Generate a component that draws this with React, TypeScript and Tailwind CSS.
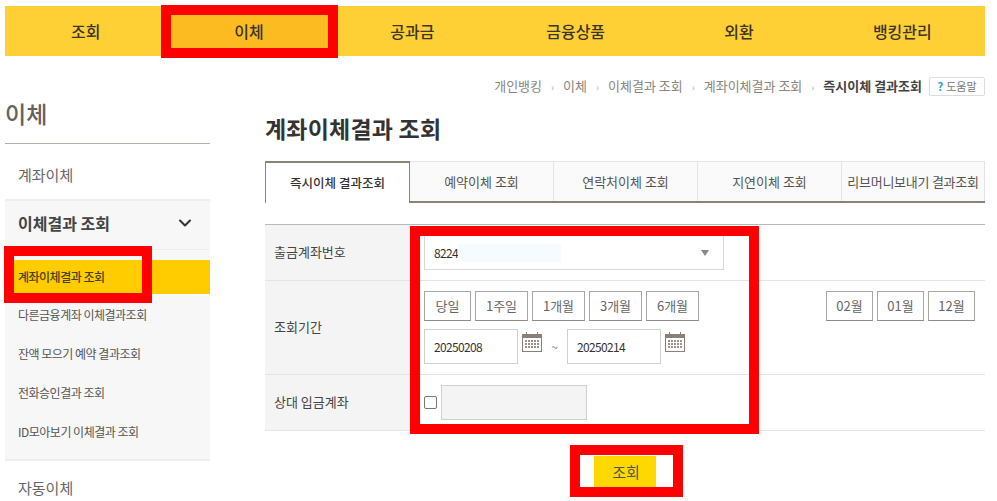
import React from "react";
import { ChevronDown } from "lucide-react";

const navItems = ["조회", "이체", "공과금", "금융상품", "외환", "뱅킹관리"];
const crumbs = ["개인뱅킹", "이체", "이체결과 조회", "계좌이체결과 조회"];
const tabs = ["예약이체 조회", "연락처이체 조회", "지연이체 조회"];
const subMenu = ["다른금융계좌 이체결과조회", "잔액 모으기 예약 결과조회", "전화승인결과 조회", "ID모아보기 이체결과 조회"];

const CalendarIcon = () => (
  <svg width="20" height="20" viewBox="0 0 20 20" className="mt-[3px] ml-1 shrink-0">
    <rect x="0.5" y="2.5" width="19" height="17" fill="#fff" stroke="#8a8078" />
    <rect x="0" y="2" width="20" height="4" fill="#8a8078" />
    <rect x="4" y="0" width="1" height="3" fill="#8a8078" />
    <rect x="15" y="0" width="1" height="3" fill="#8a8078" />
    {[8, 11, 14].map((y) =>
      [3, 6, 9, 12, 15].map((x) => <rect key={`${x}-${y}`} x={x} y={y} width="2" height="2" fill="#9a928b" />)
    )}
  </svg>
);

const PeriodButton = ({ label, width }: { label: string; width: string }) => (
  <button className={`${width} h-[30px] border border-[#aaa7a3] border-b-[#8f8a85] bg-white text-[13px] text-[#666]`}>
    {label}
  </button>
);

const DateInput = ({ value }: { value: string }) => (
  <div className="w-[94px] h-[35px] border border-[#d0d0d0] pl-[9px] flex items-center text-[12px] tracking-[-0.65px] text-[#333]">{value}</div>
);

const FormRow = ({ label, height, children }: { label: string; height: string; children: React.ReactNode }) => (
  <div className={`flex ${height} border-b border-[#e4e4e4]`}>
    <div className="w-[145px] shrink-0 bg-[#f4f4f4] pl-[9px] pb-[2px] flex items-center text-[13px] text-[#444]">{label}</div>
    <div className="flex-1 pl-[14px] pr-[10px]">{children}</div>
  </div>
);

export default function App() {
  return (
    <div className="relative w-[997px] h-[501px] overflow-hidden bg-white pt-[6px] px-[5px] text-[#444] font-['Noto_Sans_CJK_KR','Noto_Sans',sans-serif]">
      {/* top nav */}
      <div className="w-[980px] h-[50px] bg-[#ffd036] grid grid-cols-6">
        {navItems.map((item) => (
          <div
            key={item}
            className={`flex items-center justify-center pr-[2px] text-[16px] font-medium text-[#3d3426] ${item === "이체" ? "bg-[#fdbb22]" : ""}`}
          >
            {item}
          </div>
        ))}
      </div>

      <div className="flex">
        {/* sidebar */}
        <div className="w-[205px] shrink-0 pt-[40px]">
          <div className="h-[48px] border-b border-[#b5b1aa] text-[23px] font-medium leading-[35px] text-[#66605a]">이체</div>
          <div className="h-[55px] pl-[13px] pt-[8px] flex items-center text-[15px] text-[#666]">계좌이체</div>
          <div className="bg-[#f7f7f7] border-t-2 border-b-2 border-[#eeeeee] h-[262px]">
            <div className="h-[49px] pl-[13px] pr-[15px] pb-[4px] flex items-center justify-between border-b border-[#eeeeee]">
              <span className="text-[16px] font-bold text-[#444]">이체결과 조회</span>
              <ChevronDown size={20} strokeWidth={2.5} className="text-[#333]" />
            </div>
            <div className="pt-[10px]">
              <div className="h-[34px] bg-[#ffcc00] pl-[13px] flex items-center text-[12px] tracking-[-0.5px] font-medium text-[#4a3f1c]">
                계좌이체결과 조회
              </div>
              {subMenu.map((item) => (
                <div key={item} className="h-[39px] pl-[13px] pt-[3px] flex items-center text-[12px] tracking-[-0.5px] text-[#555]">
                  {item}
                </div>
              ))}
            </div>
          </div>
          <div className="pl-[13px] pt-[15px] text-[15px] leading-[24px] text-[#666]">자동이체</div>
        </div>

        {/* main */}
        <div className="w-[720px] ml-[55px]">
          <div className="h-[40px] pt-[20px] flex items-center justify-end text-[13px] text-[#8a8580]">
            {crumbs.map((crumb) => (
              <React.Fragment key={crumb}>
                <span>{crumb}</span>
                <span className="mx-[9px] text-[10px] text-[#b5b1aa]">›</span>
              </React.Fragment>
            ))}
            <span className="font-bold text-[#444]">즉시이체 결과조회</span>
            <span className="ml-[7px] w-[56px] h-[19px] border border-[#ddd] rounded-[2px] flex items-center justify-center text-[11px] text-[#777]">
              <b className="text-[#2a9bc9] mr-[3px]">?</b>도움말
            </span>
          </div>

          <h1 className="mt-[16px] h-[36px] text-[23px] tracking-[0.2px] font-bold leading-[32px] text-[#333]">계좌이체결과 조회</h1>

          <div className="mt-[13px] h-[42px] flex border-b-2 border-[#8c8278]">
            <div className="w-[145px] h-[42px] bg-white border-t-2 border-l border-r border-[#8c8278] flex items-center justify-center text-[12.5px] font-medium text-[#333]">
              즉시이체 결과조회
            </div>
            {tabs.map((tab) => (
              <div
                key={tab}
                className="w-[144px] bg-[#fafafa] border-t border-r border-[#e4e4e4] flex items-center justify-center text-[13px] text-[#555] whitespace-nowrap"
              >
                {tab}
              </div>
            ))}
            <div className="w-[143px] bg-[#fafafa] border-t border-r border-[#e4e4e4] flex items-center justify-center text-[13px] tracking-[-0.25px] text-[#555] whitespace-nowrap">
              리브머니보내기 결과조회
            </div>
          </div>

          <div className="mt-[21px] border-t border-[#b9b9b9]">
            <FormRow label="출금계좌번호" height="h-[56px]">
              <div className="mt-[10px] w-[300px] h-[35px] border border-[#d8d8d8] pl-[9px] pr-[14px] flex items-center justify-between text-[12px] tracking-[-0.65px] text-[#333]">
                <span className="flex items-center">
                  8224<span className="w-[103px] h-[18px] bg-[#f5fbff]" />
                </span>
                <span className="w-0 h-0 border-x-[4px] border-x-transparent border-t-[6px] border-t-[#888]" />
              </div>
            </FormRow>
            <FormRow label="조회기간" height="h-[94px]">
              <div className="pt-[10px] flex justify-between">
                <div className="flex gap-1">
                  <PeriodButton label="당일" width="w-[47px]" />
                  <PeriodButton label="1주일" width="w-[53px]" />
                  <PeriodButton label="1개월" width="w-[53px]" />
                  <PeriodButton label="3개월" width="w-[53px]" />
                  <PeriodButton label="6개월" width="w-[53px]" />
                </div>
                <div className="flex gap-1">
                  <PeriodButton label="02월" width="w-[47px]" />
                  <PeriodButton label="01월" width="w-[47px]" />
                  <PeriodButton label="12월" width="w-[47px]" />
                </div>
              </div>
              <div className="mt-[8px] flex">
                <DateInput value="20250208" />
                <CalendarIcon />
                <span className="w-[25px] text-center text-[12px] leading-[35px] text-[#777]">~</span>
                <DateInput value="20250214" />
                <CalendarIcon />
              </div>
            </FormRow>
            <FormRow label="상대 입금계좌" height="h-[56px]">
              <div className="h-full flex items-center gap-1">
                <span className="w-[13px] h-[13px] border border-[#767676] rounded-[2px] bg-white" />
                <span className="w-[146px] h-[35px] border border-[#d0d0d0] bg-[#f4f4f4]" />
              </div>
            </FormRow>
          </div>

          <div className="mt-[25px] flex justify-center">
            <button className="w-[62px] h-[32px] pl-[2px] bg-[#ffd800] text-[15px] text-[#555]">조회</button>
          </div>
        </div>
      </div>

      {/* red annotation boxes */}
      <div className="absolute left-[161px] top-[5px] w-[177px] h-[53px] border-[10px] border-[#ff0000]" />
      <div className="absolute left-[4px] top-[246px] w-[148px] h-[57px] border-[10px] border-[#ff0000]" />
      <div className="absolute left-[410px] top-[226px] w-[349px] h-[208px] border-[10px] border-[#ff0000]" />
      <div className="absolute left-[570px] top-[445px] w-[113px] h-[52px] border-[10px] border-[#ff0000]" />
    </div>
  );
}
